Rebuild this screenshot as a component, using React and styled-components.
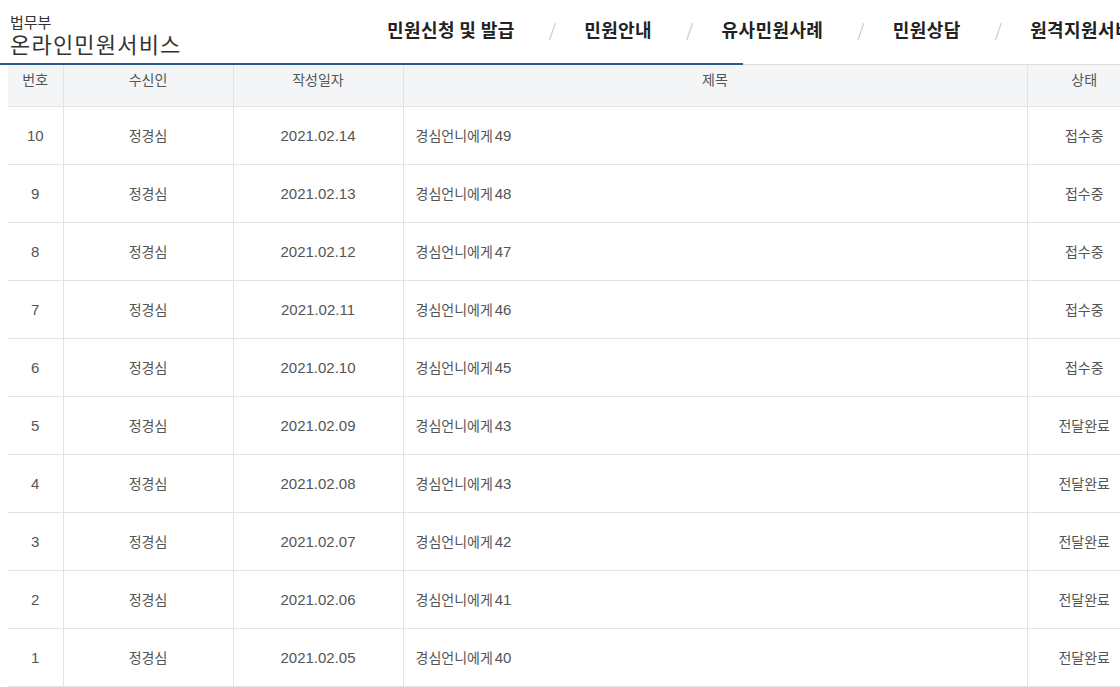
import React from 'react';
import styled, { createGlobalStyle } from 'styled-components';

const Global = createGlobalStyle`
  html, body { margin: 0; padding: 0; overflow: hidden; background: #fff; }
  body { font-family: "Noto Sans CJK KR", "Noto Sans", sans-serif; width: 1120px; }
`;

const Header = styled.header`
  position: relative;
  display: flex;
  align-items: center;
  height: 64px;
  border-bottom: 1px solid #dcdcdc;
  white-space: nowrap;
  &::after {
    content: '';
    position: absolute;
    left: 0;
    bottom: -1px;
    width: 743px;
    height: 2px;
    background: #2b5a8a;
  }
`;

const Logo = styled.div`
  padding-left: 10px;
  width: 377px;
  flex-shrink: 0;
  color: #333;
  small { display: block; font-size: 15px; line-height: 17px; margin-top: 4px; }
  strong { display: block; font-size: 22px; font-weight: 400; line-height: 26px; letter-spacing: 1.2px; }
`;

const Nav = styled.nav`
  display: flex;
  align-items: center;
  font-size: 18px;
  font-weight: 700;
  letter-spacing: 0.4px;
  color: #222;
  margin-bottom: 6px;
`;

const Sep = styled.span`
  color: #bbb;
  font-weight: 300;
  margin: 0 28px 0 34px;
`;

const Table = styled.table`
  margin-left: 8px;
  width: 1133px;
  border-collapse: collapse;
  font-size: 14px;
  color: #555;
`;

const Th = styled.th`
  background: #f4f5f7;
  font-weight: 400;
  height: 41px;
  vertical-align: top;
  padding: 4px 0 0;
  box-sizing: border-box;
  width: ${p => p.w}px;
  border-left: ${p => (p.first ? 'none' : '1px solid #e3e3e3')};
  border-bottom: 1px solid #e3e3e3;
`;

const Td = styled.td`
  height: 57px;
  padding: 0 0 0 ${p => (p.align === 'left' ? '12px' : '0')};
  text-align: ${p => p.align || 'center'};
  border-left: ${p => (p.first ? 'none' : '1px solid #e3e3e3')};
  border-bottom: 1px solid #e3e3e3;
  font-family: ${p => (p.num ? '"Liberation Sans", "Noto Sans CJK KR", sans-serif' : 'inherit')};
  font-size: ${p => (p.num ? '15px' : '14px')};
`;

const Num = styled.span`
  font-family: "Liberation Sans", sans-serif;
  font-size: 15px;
  margin-left: 2px;
`;

const rows = [
  [10, '2021.02.14', 49, '접수중'],
  [9, '2021.02.13', 48, '접수중'],
  [8, '2021.02.12', 47, '접수중'],
  [7, '2021.02.11', 46, '접수중'],
  [6, '2021.02.10', 45, '접수중'],
  [5, '2021.02.09', 43, '전달완료'],
  [4, '2021.02.08', 43, '전달완료'],
  [3, '2021.02.07', 42, '전달완료'],
  [2, '2021.02.06', 41, '전달완료'],
  [1, '2021.02.05', 40, '전달완료'],
];

const navItems = ['민원신청 및 발급', '민원안내', '유사민원사례', '민원상담', '원격지원서비스'];

export default function App() {
  return (
    <>
      <Global />
      <Header>
        <Logo>
          <small>법무부</small>
          <strong>온라인민원서비스</strong>
        </Logo>
        <Nav>
          {navItems.map((n, i) => (
            <React.Fragment key={n}>
              {i > 0 && <Sep>/</Sep>}
              <span>{n}</span>
            </React.Fragment>
          ))}
        </Nav>
      </Header>
      <Table>
        <thead>
          <tr>
            <Th first w={55}>번호</Th>
            <Th w={170}>수신인</Th>
            <Th w={170}>작성일자</Th>
            <Th w={624}>제목</Th>
            <Th>상태</Th>
          </tr>
        </thead>
        <tbody>
          {rows.map(([no, date, n, st]) => (
            <tr key={no}>
              <Td first num>{no}</Td>
              <Td>정경심</Td>
              <Td num>{date}</Td>
              <Td align="left">경심언니에게<Num>{n}</Num></Td>
              <Td>{st}</Td>
            </tr>
          ))}
        </tbody>
      </Table>
    </>
  );
}
